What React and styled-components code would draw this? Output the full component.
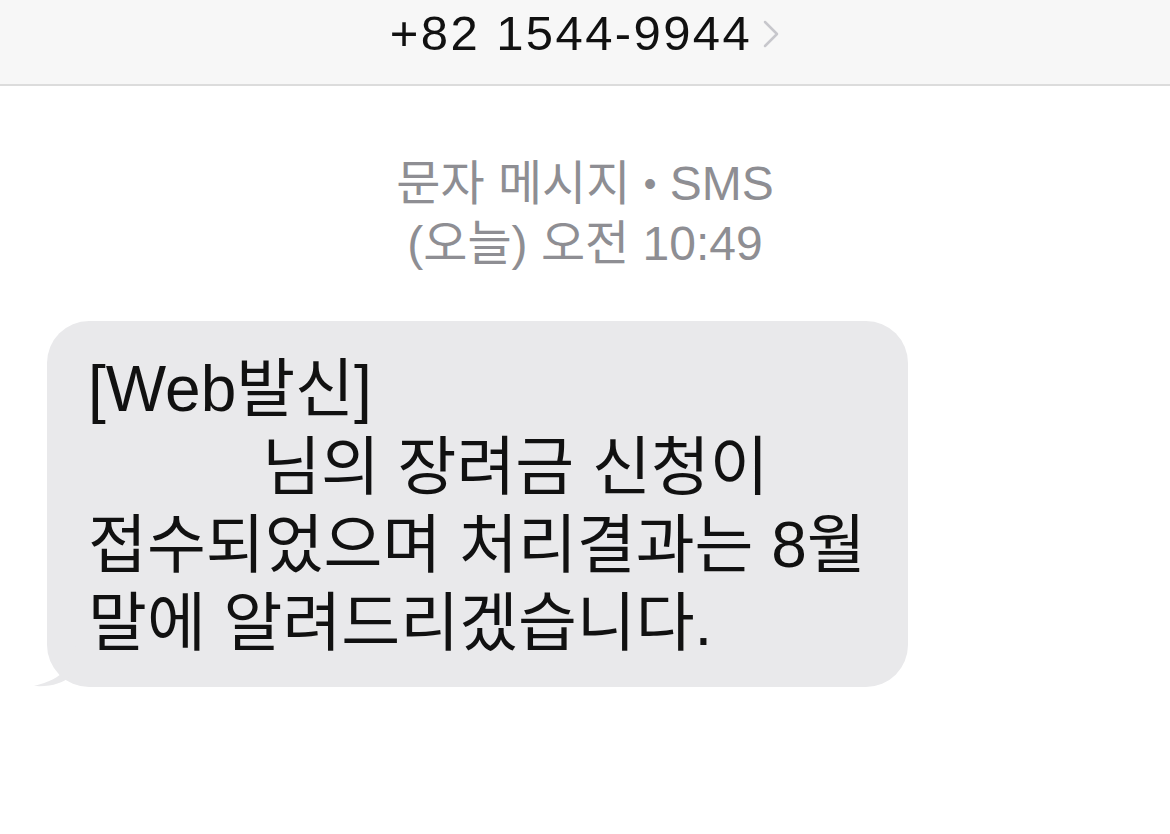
import styled, { createGlobalStyle } from "styled-components";

const GlobalStyle = createGlobalStyle`
    html, body {
        margin: 0;
        padding: 0;
        background: #ffffff;
    }
    body {
        font-family: "Liberation Sans", "Noto Sans CJK KR", sans-serif;
    }
`

const Screen = styled.div`
    width: 1170px;
    height: 834px;
    background: #ffffff;
    overflow: hidden;
    display: flex;
    flex-direction: column;
`

const Header = styled.header`
    height: 86px;
    flex-shrink: 0;
    background: #f7f7f7;
    border-bottom: 2px solid #dcdcdc;
    display: flex;
    justify-content: center;
    align-items: flex-start;
    padding-top: 4px;
    box-sizing: border-box;
`

const Title = styled.div`
    display: flex;
    align-items: center;
    gap: 10px;
    font-size: 49px;
    letter-spacing: 2.4px;
    color: #111;
    line-height: 58px;

    & svg{
        margin-top: 2px;
    }
`

const Meta = styled.div`
    margin-top: 68px;
    text-align: center;
    color: #8e8e93;
    font-size: 48px;
    line-height: 60px;
`

const Dot = styled.span`
    font-size: 36px;
    vertical-align: 4px;
`

const Thread = styled.div`
    padding: 47px 0 0 47px;
`

const Bubble = styled.div`
    position: relative;
    width: 861px;
    height: 366px;
    box-sizing: border-box;
    background: #e9e9eb;
    border-radius: 42px;
    padding: 29px 0 0 41px;
    color: #111;
    font-size: 64px;
    line-height: 78px;
`

const Tail = styled.svg`
    position: absolute;
    left: -13px;
    bottom: 0;
`

const Line = styled.div`
    white-space: nowrap;
    padding-left: ${p => p.$indent || 0}px;
`

export default function App(){
    return(
        <Screen>
            <GlobalStyle />
            <Header>
                <Title>
                    +82 1544-9944
                    <svg width="18" height="30" viewBox="0 0 18 30">
                        <path d="M3 3 L15 15 L3 27" fill="none" stroke="#c7c7cc" strokeWidth="2.5" strokeLinecap="round" strokeLinejoin="round" />
                    </svg>
                </Title>
            </Header>
            <Meta>
                <div>문자 메시지 <Dot>•</Dot> SMS</div>
                <div>(오늘) 오전 10:49</div>
            </Meta>
            <Thread>
                <Bubble>
                    <Tail width="42" height="42" viewBox="0 0 42 42">
                        <path d="M42 0 C38 20 30 34 0 41 C18 42 28 38 36 32 Z" fill="#e9e9eb" />
                    </Tail>
                    <Line>[Web발신]</Line>
                    <Line $indent={174}>님의 장려금 신청이</Line>
                    <Line>접수되었으며 처리결과는 8월</Line>
                    <Line>말에 알려드리겠습니다.</Line>
                </Bubble>
            </Thread>
        </Screen>
    )
}
